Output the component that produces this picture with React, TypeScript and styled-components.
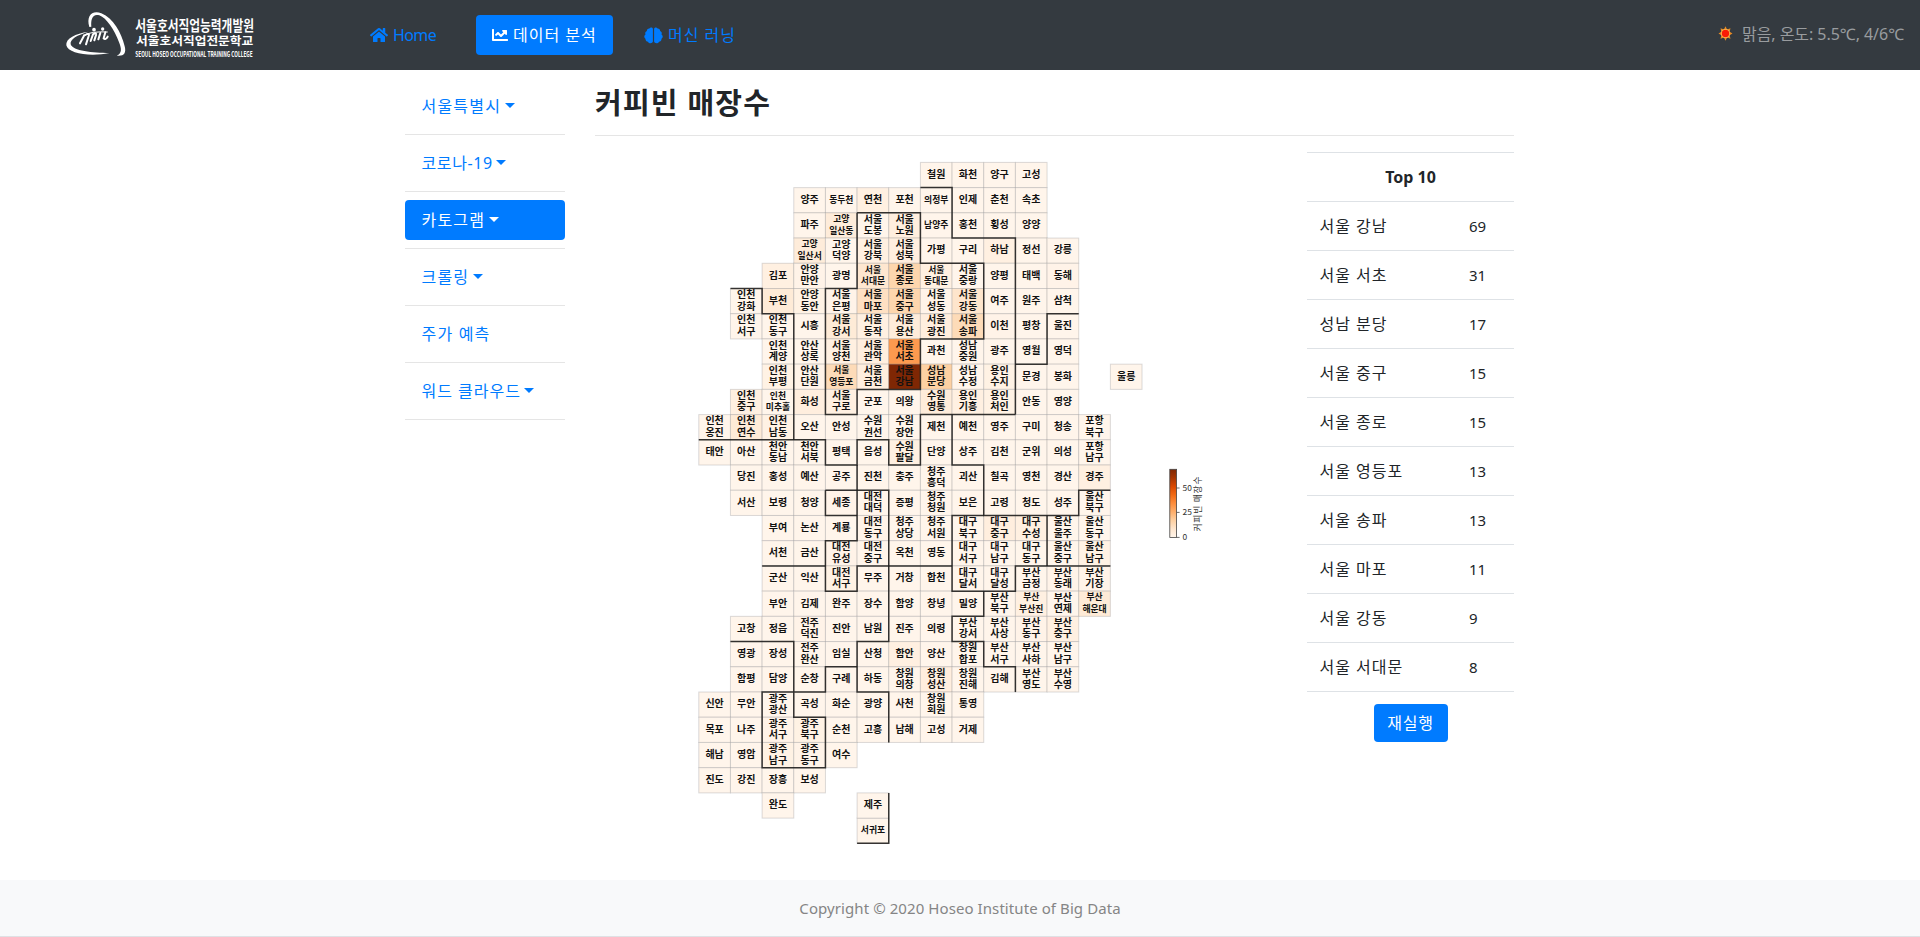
import React from 'react';
import styled, { createGlobalStyle } from 'styled-components';
import { FaHome, FaChartLine } from 'react-icons/fa';

const GlobalStyle = createGlobalStyle`
  *, *::before, *::after { box-sizing: border-box; }
  body {
    margin: 0;
    background: #fff;
    color: #212529;
    font: 400 16px/24px "Noto Sans", "Noto Sans CJK KR", sans-serif;
  }
`;

const Page = styled.div`
  display: flex;
  flex-direction: column;
  height: 937px;
  overflow: hidden;
`;

/* ---------- navigation bar ---------- */

const Navbar = styled.nav`
  display: flex;
  align-items: center;
  height: 70px;
  padding: 0 16px 0 60px;
  background: #343a40;
`;

const Brand = styled.svg`
  display: block;
  width: 200px;
  height: 60px;
  margin-right: 94px;
  overflow: visible;
`;

const NavLink = styled.a<{ $active?: boolean; $width: number; $spacing?: number }>`
  display: flex;
  align-items: center;
  width: ${(p) => p.$width}px;
  height: 40px;
  padding-left: 16px;
  border-radius: 4px;
  white-space: nowrap;
  letter-spacing: ${(p) => p.$spacing ?? 0}px;
  color: ${(p) => (p.$active ? '#fff' : '#007bff')};
  background: ${(p) => (p.$active ? '#007bff' : 'transparent')};

  svg {
    flex: none;
    margin-right: 5px;
  }
`;

const NavGap = styled.span<{ $width: number }>`
  width: ${(p) => p.$width}px;
`;

const Weather = styled.div`
  display: flex;
  align-items: center;
  gap: 9px;
  margin-left: auto;
  color: #999c9f;
  letter-spacing: -0.05px;
  padding-bottom: 3px;
  white-space: nowrap;
`;

/* ---------- body ---------- */

const Container = styled.main`
  display: flex;
  gap: 30px;
  width: 1110px;
  height: 810px;
  flex: none;
  margin: 0 auto;
`;

const Sidebar = styled.aside`
  width: 160px;
  padding-top: 16px;
`;

const MenuItem = styled.a<{ $active?: boolean; $spacing?: number }>`
  display: flex;
  align-items: center;
  height: 40px;
  padding-left: 16.5px;
  border-radius: 4px;
  letter-spacing: ${(p) => p.$spacing ?? 1.2}px;
  color: ${(p) => (p.$active ? '#fff' : '#007bff')};
  background: ${(p) => (p.$active ? '#007bff' : 'transparent')};
`;

const Caret = styled.span`
  margin: 0 0 2px 3.5px;
  border-top: 5px solid currentColor;
  border-left: 5px solid transparent;
  border-right: 5px solid transparent;
`;

const Rule = styled.hr<{ $margin: number }>`
  margin: ${(p) => p.$margin}px 0;
  border: 0;
  border-top: 1px solid #e5e5e5;
`;

const Content = styled.section`
  width: 919px;
  padding-top: 16px;
`;

const Title = styled.h3`
  margin: 0;
  font-size: 29px;
  line-height: 33px;
  font-weight: 600;
  letter-spacing: 1.2px;
`;

const Columns = styled.div`
  display: flex;
  justify-content: space-between;
`;

const MapFigure = styled.svg`
  display: block;
  width: 640px;
  height: 710px;
  font-family: "Noto Sans CJK KR", sans-serif;
`;

const Ranking = styled.div`
  width: 207px;
  display: flex;
  flex-direction: column;
  align-items: center;
`;

const Table = styled.table`
  width: 100%;
  table-layout: fixed;
  border-collapse: collapse;
  border-bottom: 1px solid #dee2e6;

  th, td {
    height: 49px;
    padding: 0 12px;
    border-top: 1px solid #dee2e6;
    text-align: left;
    white-space: nowrap;
  }
  th { text-align: center; font-size: 16px; font-weight: 700; }
`;

const NameCell = styled.td`
  && { padding-left: 12.5px; }
  letter-spacing: 1px;
`;

const CountCell = styled.td`
  font-size: 15px;
  letter-spacing: -0.2px;
`;

const RerunButton = styled.button`
  width: 74px;
  height: 38px;
  margin-top: 12px;
  padding: 0;
  border: 0;
  border-radius: 4px;
  background: #007bff;
  color: #fff;
  font: inherit;
  letter-spacing: 0.8px;
`;

const Footer = styled.footer`
  display: flex;
  align-items: center;
  justify-content: center;
  height: 57px;
  border-bottom: 1px solid #dfe1e4;
  background: #f8f9fa;
  color: #858585;
  font-size: 15px;
  letter-spacing: 0.08px;
`;

/* ---------- cartogram data ---------- */

const CELL_W = 31.66;
const CELL_H = 25.22;

// Each row: starting column, then names; ":n" gives the number of stores.
const ROWS: [number, string][] = [
  [7, '철원,화천,양구,고성'],
  [3, '양주,동두천,연천:3,포천,의정부,인제,춘천,속초'],
  [3, '파주,고양 일산동:5,서울 도봉,서울 노원:4,남양주,홍천,횡성,양양'],
  [3, '고양 일산서:5,고양 덕양,서울 강북:3,서울 성북:4,가평,구리,하남:3,정선,강릉'],
  [2, '김포:3,안양 만안:1,광명,서울 서대문:8,서울 종로:15,서울 동대문:3,서울 중랑,양평,태백,동해:1'],
  [1, '인천 강화,부천:6,안양 동안:2,서울 은평:1,서울 마포:11,서울 중구:15,서울 성동:1,서울 강동:9,여주,원주,삼척'],
  [1, '인천 서구,인천 동구,시흥,서울 강서:6,서울 동작:3,서울 용산:5,서울 광진:4,서울 송파:13,이천:1,평창,울진'],
  [2, '인천 계양,안산 상록,서울 양천:3,서울 관악:4,서울 서초:31,과천,성남 중원,광주,영월,영덕'],
  [2, '인천 부평:2,안산 단원:1,서울 영등포:13,서울 금천:4,서울 강남:69,성남 분당:17,성남 수정,용인 수지:2,문경,봉화'],
  [1, '인천 중구:3,인천 미추홀,화성:4,서울 구로:3,군포,의왕,수원 영통:5,용인 기흥:3,용인 처인:2,안동,영양'],
  [0, '인천 옹진,인천 연수:6,인천 남동:2,오산,안성,수원 권선,수원 장안,제천,예천,영주,구미,청송,포항 북구'],
  [0, '태안,아산,천안 동남,천안 서북,평택,음성,수원 팔달:3,단양,상주,김천,군위,의성,포항 남구'],
  [1, '당진,홍성,예산,공주,진천,충주,청주 흥덕,괴산,칠곡,영천,경산,경주:3'],
  [1, '서산,보령,청양,세종:1,대전 대덕,증평,청주 청원,보은,고령,청도,성주,울산 북구'],
  [2, '부여,논산,계룡,대전 동구:1,청주 상당,청주 서원,대구 북구,대구 중구:4,대구 수성:3,울산 울주,울산 동구'],
  [2, '서천,금산,대전 유성:1,대전 중구,옥천,영동,대구 서구,대구 남구,대구 동구,울산 중구,울산 남구:2'],
  [2, '군산,익산,대전 서구:2,무주,거창,합천,대구 달서,대구 달성,부산 금정,부산 동래:1,부산 기장:1'],
  [2, '부안,김제,완주,장수,함양,창녕,밀양,부산 북구,부산 부산진:3,부산 연제,부산 해운대:6'],
  [1, '고창,정읍,전주 덕진:1,진안,남원,진주,의령,부산 강서,부산 사상,부산 동구:1,부산 중구:3'],
  [1, '영광,장성,전주 완산,임실,산청,함안:3,양산,창원 합포,부산 서구,부산 사하,부산 남구'],
  [1, '함평,담양,순창,구례,하동,창원 의창,창원 성산:4,창원 진해,김해,부산 영도,부산 수영'],
  [0, '신안,무안,광주 광산,곡성,화순,광양,사천,창원 회원,통영'],
  [0, '목포,나주,광주 서구:1,광주 북구:2,순천,고흥,남해,고성,거제'],
  [0, '해남,영암,광주 남구:2,광주 동구:1,여수'],
  [0, '진도,강진,장흥,보성'],
  [2, '완도'],
  [5, '서귀포'],
];

interface Cell {
  x: number;
  y: number;
  name: string;
  value: number;
}

const parse = (x: number, y: number, entry: string): Cell => {
  const [name, value] = entry.split(':');
  return { x, y, name, value: Number(value ?? 0) };
};

const CELLS: Cell[] = [
  ...ROWS.flatMap(([start, line], y) => line.split(',').map((e, i) => parse(start + i, y, e))),
  parse(13, 8, '울릉'),
  parse(5, 25, '제주'),
];

// Province borders as grid polylines.
const BORDERS = [
  '7,1 8,1 8,3 10,3 10,10',
  '10,8 11,8 11,6 12,6',
  '5,2 7,2 7,4 9,4 9,7 7,7 7,9 5,9 5,10 4,10 4,5 5,5 5,2',
  '1,5 2,5 2,6 3,6 3,11',
  '0,11 4,11 4,12 5,12 5,11 6,11 6,12 7,12 7,10 10,10',
  '8,10 8,12 9,12 9,14 12,14 12,13 13,13',
  '5,12 5,15 4,15 4,17 5,17 5,16 8,16',
  '4,13 6,13 6,19 5,19 5,21 6,21 6,23',
  '4,13 4,14 5,14',
  '2,16 4,16',
  '9,14 8,14 8,17 10,17 10,16 13,16',
  '11,14 11,16',
  '9,17 9,18 8,18 8,19 9,19 9,20 10,20 10,21',
  '1,19 3,19 3,22 4,22 4,24 2,24 2,21 4,21 4,20 5,20',
  '6,25 6,27 5,27',
];

const ORANGES = [
  [255, 245, 235], [254, 230, 206], [253, 208, 162], [253, 174, 107], [253, 141, 60],
  [241, 105, 19], [217, 72, 1], [166, 54, 3], [127, 39, 4],
];

const orange = (value: number) => {
  const t = Math.min(7.999, (value / 69) * 8);
  const i = Math.floor(t);
  const mix = ORANGES[i].map((c, k) => Math.round(c + (ORANGES[i + 1][k] - c) * (t - i)));
  return `rgb(${mix.join(',')})`;
};

const gridPoints = (line: string) =>
  line
    .split(' ')
    .map((p) => {
      const [x, y] = p.split(',').map(Number);
      return `${(x * CELL_W).toFixed(2)},${(y * CELL_H).toFixed(2)}`;
    })
    .join(' ');

const CellLabel = ({ cell }: { cell: Cell }) => {
  const lines = cell.name.split(' ');
  const last = lines[lines.length - 1];
  const size = last.length > 2 ? 8.8 : 10;
  const cx = (cell.x + 0.5) * CELL_W;
  const cy = (cell.y + 0.5) * CELL_H;
  return (
    <>
      {lines.map((text, i) => (
        <text
          key={i}
          x={cx}
          y={cy + size * 0.33 - 0.5 + (lines.length > 1 ? (i ? 5.7 : -5.7) : 0)}
          fontSize={size}
          fontWeight={700}
          textAnchor="middle"
        >
          {text}
        </text>
      ))}
    </>
  );
};

const Cartogram = () => (
  <MapFigure viewBox="595 152 640 710">
    <defs>
      <linearGradient id="oranges" x1="0" y1="1" x2="0" y2="0">
        {ORANGES.map((c, i) => (
          <stop key={i} offset={i / 8} stopColor={`rgb(${c.join(',')})`} />
        ))}
      </linearGradient>
    </defs>
    <g transform="translate(698.8 162.4)" fill="#111">
      {CELLS.map((c) => (
        <rect
          key={`${c.x}-${c.y}`}
          x={c.x * CELL_W}
          y={c.y * CELL_H}
          width={CELL_W}
          height={CELL_H}
          fill={orange(c.value)}
          stroke="#88888c"
          strokeOpacity={0.3}
          strokeWidth={1}
        />
      ))}
      {BORDERS.map((b) => (
        <polyline key={b} points={gridPoints(b)} fill="none" stroke="#1d1b1a" strokeOpacity={0.88} strokeWidth={1.5} />
      ))}
      {CELLS.map((c) => (
        <CellLabel key={`${c.x}-${c.y}`} cell={c} />
      ))}
    </g>
    <rect x="1169.8" y="469.3" width="6.8" height="68.2" fill="url(#oranges)" stroke="#444" strokeWidth="0.8" />
    {[
      [488, 50],
      [512.4, 25],
      [537.4, 0],
    ].map(([y, n]) => (
      <g key={n}>
        <line x1="1176.8" x2="1179.6" y1={y} y2={y} stroke="#444" strokeWidth="0.8" />
        <text x="1182.6" y={y + 2.8} fontSize="8.4" fill="#333">
          {n}
        </text>
      </g>
    ))}
    <text
      transform="translate(1201.2 531.5) rotate(-90)"
      fontSize="8.8"
      textLength="55"
      fill="#333"
    >
      커피빈 매장수
    </text>
  </MapFigure>
);

const Logo = () => (
  <Brand viewBox="0 0 600 180" fill="#fff" fontFamily='"Noto Sans CJK KR", sans-serif'>
    <path d="M88 66 C78 34 96 14 124 25 C160 40 184 82 194 124 C200 146 190 155 170 152 C187 145 184 130 178 114 C162 72 140 40 118 31 C98 25 92 42 94 65 Z" />
    <path d="M86 80 C46 86 17 100 19 121 C23 146 92 156 148 144 C98 144 38 138 32 118 C29 102 52 90 86 80 Z" />
    <g fill="none" stroke="#fff" strokeWidth="6" strokeLinecap="round">
      <path d="M60 115 L72 92 M76 90 Q90 82 86 93 L78 118" />
      <path d="M92 108 L99 88 Q110 80 108 90 L103 106" />
      <path d="M70 91 Q96 78 142 81" strokeWidth="3" />
      <path d="M121 84 L115 103 M136 82 L131 100 Q136 106 143 95" />
    </g>
    <circle cx="102" cy="74" r="5.5" />
    <circle cx="128" cy="72" r="5" />
    <text x="226" y="77" fontSize="43" fontWeight="700" textLength="356" lengthAdjust="spacingAndGlyphs">
      서울호서직업능력개발원
    </text>
    <text x="228" y="120" fontSize="35" fontWeight="700" textLength="352" lengthAdjust="spacingAndGlyphs">
      서울호서직업전문학교
    </text>
    <text
      x="226"
      y="155"
      fontSize="22"
      fontWeight="700"
      textLength="352"
      lengthAdjust="spacingAndGlyphs"
    >
      SEOUL HOSEO OCCUPATIONAL TRAINING COLLEGE
    </text>
  </Brand>
);

const BrainIcon = () => (
  <svg width="19" height="17" viewBox="0 0 19 17" fill="currentColor">
    <path d="M8.9 1.8C8.5.3 6.2 0 5.4 1.5 3.8 1.4 2.7 2.6 2.9 4 1.3 4.6.9 6.2 1.5 7.4-.2 8.4 0 10.8 1.5 11.7c-.2 1.9 1 3.1 2.5 3.1.9 2.1 4.4 2 4.9-.2z" />
    <path d="M10.1 1.8c.4-1.5 2.7-1.8 3.5-.3 1.6-.1 2.7 1.1 2.5 2.5 1.6.6 2 2.2 1.4 3.4 1.7 1 1.5 3.4 0 4.3.2 1.9-1 3.1-2.5 3.1-.9 2.1-4.4 2-4.9-.2z" />
  </svg>
);

const SunIcon = () => (
  <svg width="15" height="15" viewBox="-7 -7.5 14 15">
    <path
      d="M0-7.2 1.6-4 5-5.2 4.1-1.8 7 0 4.1 1.8 5 5.2 1.6 4 0 7.2-1.6 4-5 5.2-4.1 1.8-7 0-4.1-1.8-5-5.2-1.6-4Z"
      fill="#e98b22"
    />
    <circle r="4.5" fill="#f9c05b" />
    <circle r="3.7" fill="#fb1c05" />
  </svg>
);

const MENU = [
  { label: '서울특별시', caret: true },
  { label: '코로나-19', caret: true, spacing: 0.6 },
  { label: '카토그램', caret: true, active: true },
  { label: '크롤링', caret: true },
  { label: '주가 예측', caret: false },
  { label: '워드 클라우드', caret: true, spacing: 1 },
];

const TOP10: [string, number][] = [
  ['서울 강남', 69],
  ['서울 서초', 31],
  ['성남 분당', 17],
  ['서울 중구', 15],
  ['서울 종로', 15],
  ['서울 영등포', 13],
  ['서울 송파', 13],
  ['서울 마포', 11],
  ['서울 강동', 9],
  ['서울 서대문', 8],
];

export default function App() {
  return (
    <Page>
      <GlobalStyle />
      <Navbar>
        <Logo />
        <NavLink $width={98} $spacing={-0.6}>
          <FaHome size={18} />
          Home
        </NavLink>
        <NavGap $width={24} />
        <NavLink $active $width={137} $spacing={1}>
          <FaChartLine size={16} />
          데이터 분석
        </NavLink>
        <NavGap $width={15} />
        <NavLink $width={120} $spacing={1}>
          <BrainIcon />
          머신 러닝
        </NavLink>
        <Weather>
          <SunIcon />
          맑음, 온도: 5.5℃, 4/6℃
        </Weather>
      </Navbar>
      <Container>
        <Sidebar>
          {MENU.map((m) => (
            <React.Fragment key={m.label}>
              <MenuItem $active={m.active} $spacing={m.spacing}>
                {m.label}
                {m.caret && <Caret />}
              </MenuItem>
              <Rule $margin={8} />
            </React.Fragment>
          ))}
        </Sidebar>
        <Content>
          <Title>커피빈 매장수</Title>
          <Rule $margin={16} />
          <Columns>
            <Cartogram />
            <Ranking>
              <Table>
                <colgroup>
                  <col style={{ width: 150 }} />
                  <col />
                </colgroup>
                <thead>
                  <tr>
                    <th colSpan={2}>Top 10</th>
                  </tr>
                </thead>
                <tbody>
                  {TOP10.map(([name, count]) => (
                    <tr key={name}>
                      <NameCell>{name}</NameCell>
                      <CountCell>{count}</CountCell>
                    </tr>
                  ))}
                </tbody>
              </Table>
              <RerunButton>재실행</RerunButton>
            </Ranking>
          </Columns>
        </Content>
      </Container>
      <Footer>Copyright © 2020 Hoseo Institute of Big Data</Footer>
    </Page>
  );
}
